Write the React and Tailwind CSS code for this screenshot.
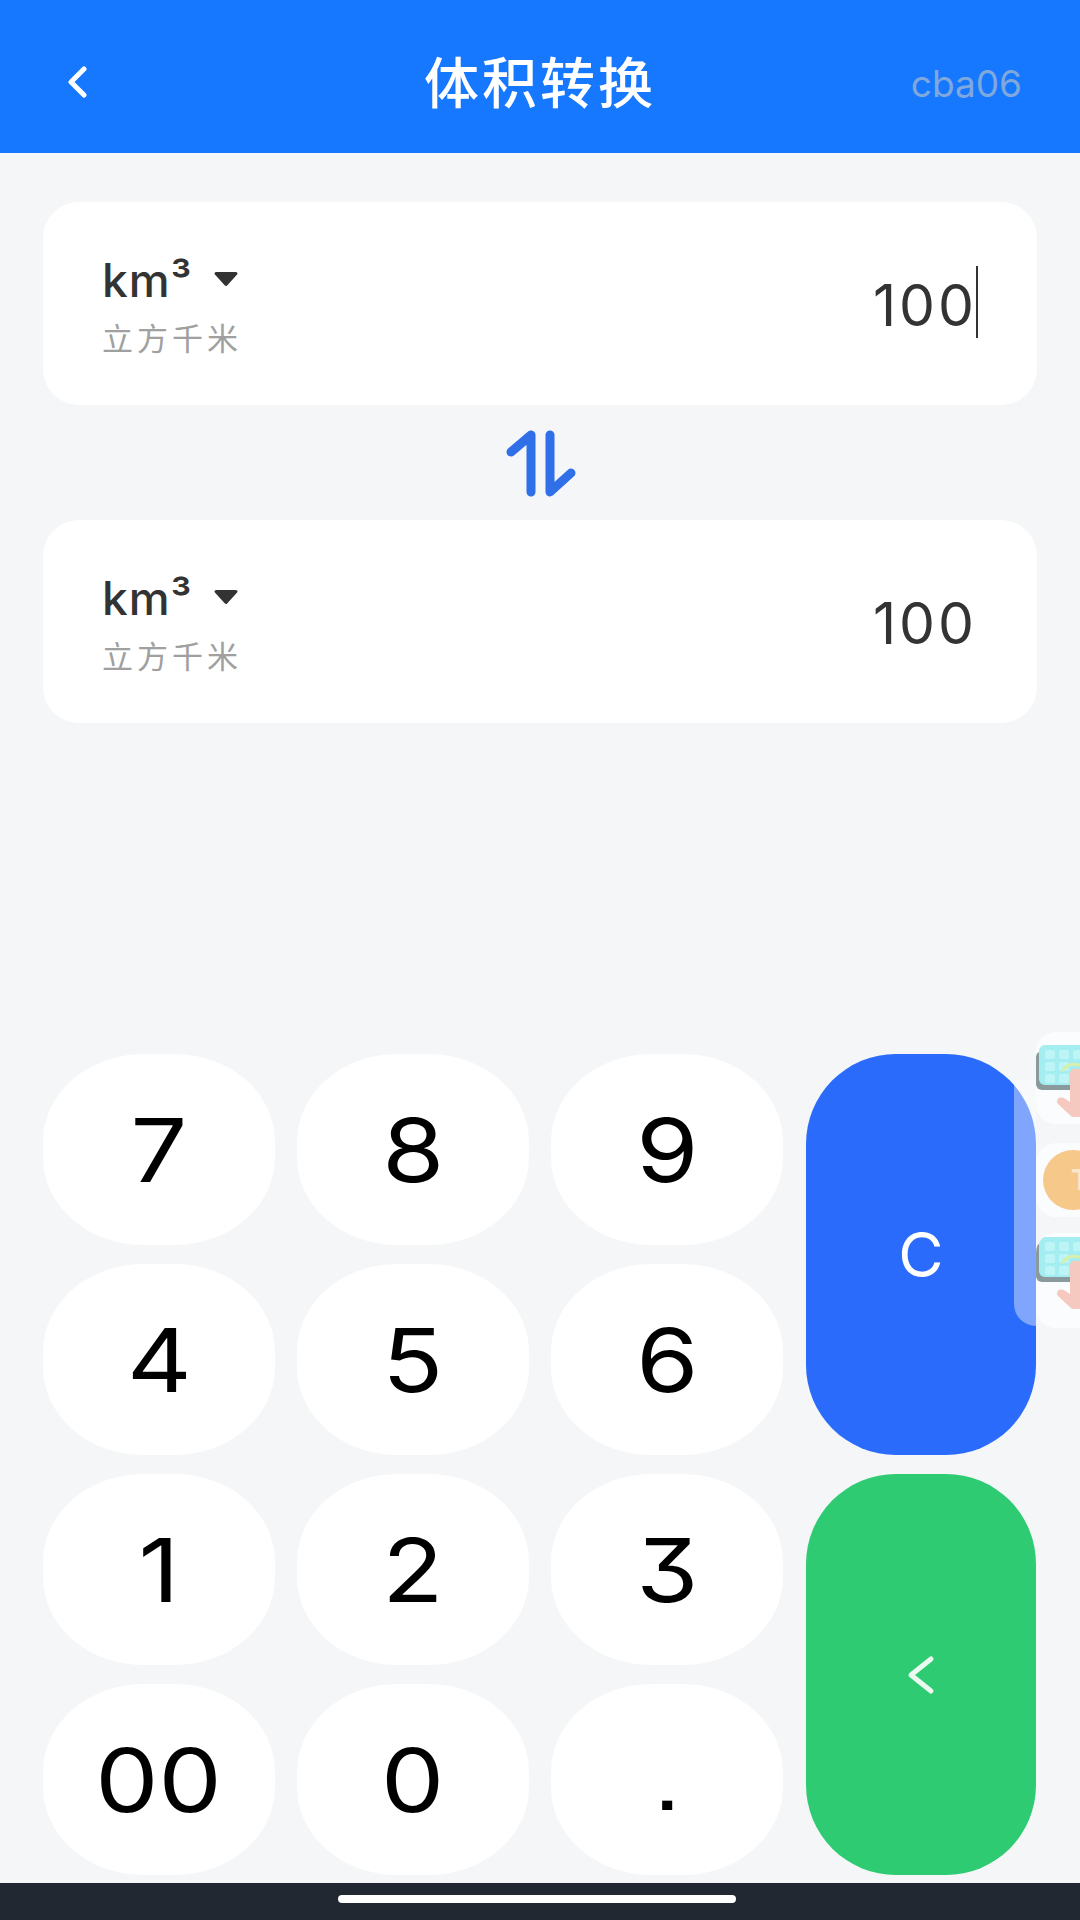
import React from "react";

const rows = ["7", "8", "9", "4", "5", "6", "1", "2", "3", "00", "0", "."];

const UnitCard = ({ cursor }) => (
  <div className="h-[203px] bg-white rounded-[36px] pl-[59px] pr-[60px] flex items-center justify-between">
    <div className="flex flex-col mt-[4px]">
      <div className="flex items-center h-[50px] font-['Inter',sans-serif] font-medium text-[46px] tracking-[1px] leading-none text-[#333333]">
        <span>km³</span>
        <svg className="ml-[20px] mt-[-2px]" width="26" height="16" viewBox="0 0 26 16">
          <path d="M3 2.5h20L13 13.5z" fill="#333333" stroke="#333333" strokeWidth="3" strokeLinejoin="round" />
        </svg>
      </div>
      <div className="mt-[12px] font-['Noto_Sans_CJK_SC',sans-serif] text-[31px] leading-[40px] tracking-[4px] text-[#a0a0a0]">立方千米</div>
    </div>
    <div className="relative mt-[4px] font-['Inter',sans-serif] text-[57px] leading-none tracking-[3px] text-[#333333]">
      100
      {cursor && <span className="absolute right-[-1px] top-[-11px] w-[2px] h-[72px] bg-[#333333]" />}
    </div>
  </div>
);

const KeyboardIcon = () => (
  <svg width="46" height="72" viewBox="0 0 46 72">
    <rect x="0" y="6" width="60" height="39" rx="6" fill="#8a9a9c" />
    <rect x="3" y="0" width="60" height="40" rx="6" fill="#a4eef2" />
    <g fill="#bdf4f6">
      <rect x="9" y="5" width="10" height="9" rx="2" />
      <rect x="23" y="5" width="10" height="9" rx="2" />
      <rect x="37" y="5" width="10" height="9" rx="2" />
      <rect x="9" y="17" width="10" height="9" rx="2" />
      <rect x="23" y="17" width="10" height="9" rx="2" />
      <rect x="9" y="29" width="10" height="9" rx="2" />
      <rect x="23" y="29" width="10" height="9" rx="2" />
    </g>
    <path d="M26 26a14 14 0 0 1 24 0" fill="none" stroke="#d5f0a8" strokeWidth="3" />
    <path d="M34 28c0-6 12-6 12 0v44H36L22 59c-3-4 1-8 6-6l6 4z" fill="#f6c9c0" />
  </svg>
);

const Key = ({ label }) => (
  <div className="bg-white rounded-[100px/88px] flex items-center justify-center">
    <span
      className={
        label === "."
          ? "font-['Liberation_Sans',sans-serif] text-[88px] leading-none text-black scale-x-[1.2] inline-block"
          : "font-['Inter',sans-serif] text-[88px] leading-none text-black [font-feature-settings:'cv09'] scale-x-[1.14] inline-block"
      }
    >
      {label}
    </span>
  </div>
);

const App = () => {
  return (
    <div className="relative w-[1080px] h-[1920px] overflow-hidden bg-[#f4f6f8] flex flex-col">
      {/* header */}
      <div className="h-[153px] shrink-0 bg-[#1677ff] flex items-center pl-[66px] pr-[58px]">
        <div className="flex-1">
          <svg width="22" height="32" viewBox="0 0 22 32" className="mt-[10px]">
            <polyline points="18,3 5,16 18,29" fill="none" stroke="#ffffff" strokeWidth="5" strokeLinecap="round" strokeLinejoin="round" />
          </svg>
        </div>
        <div className="font-['Noto_Sans_CJK_SC',sans-serif] font-medium text-[55px] leading-none tracking-[3px] text-white mt-[6px] ml-[-8px]">体积转换</div>
        <div className="flex-1 flex justify-end">
          <div className="font-['Inter',sans-serif] text-[37px] leading-none text-[#7fa8dc] mt-[14px]">cba06</div>
        </div>
      </div>

      {/* converter */}
      <div className="px-[43px] pt-[49px]">
        <UnitCard cursor />
        <div className="h-[115px] flex items-center justify-center">
          <svg width="72" height="74" viewBox="0 0 72 74">
            <path d="M7 26L27 9V66M46 9V66L67 47" fill="none" stroke="#2f6fe8" strokeWidth="9" strokeLinecap="round" strokeLinejoin="round" />
          </svg>
        </div>
        <UnitCard />
      </div>

      {/* keypad */}
      <div className="mt-auto px-[43px] grid grid-cols-4 grid-rows-[repeat(4,191px)] gap-x-[22px] gap-y-[19px]">
        {rows.slice(0, 3).map((k) => (
          <Key key={k} label={k} />
        ))}
        <div className="row-span-2 mx-[1px] bg-[#2a6bfb] rounded-[90px] flex items-center justify-center font-['Inter',sans-serif] text-[62px] leading-none text-white">C</div>
        {rows.slice(3, 6).map((k) => (
          <Key key={k} label={k} />
        ))}
        {rows.slice(6, 9).map((k) => (
          <Key key={k} label={k} />
        ))}
        <div className="row-span-2 mx-[1px] bg-[#2ecb72] rounded-[90px] flex items-center justify-center">
          <svg width="30" height="40" viewBox="0 0 30 40">
            <polyline points="25,4 5,20 25,36" fill="none" stroke="#eafaf0" strokeWidth="5" strokeLinecap="round" strokeLinejoin="round" />
          </svg>
        </div>
        {rows.slice(9).map((k) => (
          <Key key={k} label={k} />
        ))}
      </div>

      {/* system bar */}
      <div className="mt-[8px] h-[37px] shrink-0 bg-[#222831] flex justify-center pt-[12px] pr-[6px]">
        <div className="w-[398px] h-[8px] rounded-full bg-white" />
      </div>

      {/* floating side widget */}
      <div className="absolute left-[1014px] top-[1080px] w-[22px] h-[246px] rounded-bl-[24px] bg-white/40" />
      <div className="absolute left-[1036px] top-[1032px] w-[44px] h-[92px] rounded-l-[20px] bg-[#fbfcfd] overflow-hidden pt-[13px]">
        <KeyboardIcon />
      </div>
      <div className="absolute left-[1036px] top-[1143px] w-[44px] h-[74px] rounded-l-[20px] bg-[#fbfcfd] overflow-hidden flex items-center">
        <div className="ml-[7px] w-[60px] h-[60px] shrink-0 rounded-full bg-[#f6c98b] pl-[28px] pt-[16px] font-['Inter',sans-serif] font-bold text-[28px] leading-none text-[#fbe6c8]">T</div>
      </div>
      <div className="absolute left-[1036px] top-[1233px] w-[44px] h-[95px] rounded-l-[20px] bg-[#fbfcfd] overflow-hidden pt-[4px]">
        <KeyboardIcon />
      </div>
    </div>
  );
};

export default App;
